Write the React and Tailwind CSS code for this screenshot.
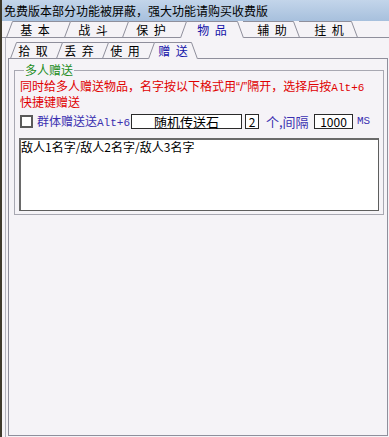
import React from 'react';

const FONT = { fontFamily: '"Noto Sans CJK SC", "Noto Sans", sans-serif' };
const MONO = { fontFamily: '"Liberation Mono", monospace' };
const LINE = '#8f8f9c';

// one slanted tab; kind = left of selected / selected / right of selected
function Tab({ label, w, width, kind, selected }) {
    const h = 17;
    let d;
    if (kind === 'sel') d = `M0.5 ${h} L6.5 0.5 H${w - 6.5} L${w - 0.5} ${h}`;
    else if (kind === 'left') d = `M0.5 ${h - 0.5} L6.5 0.5 H${w + 6.5} M0 ${h - 0.5} H${w}`;
    else d = `M-1 0.5 H${w - 6.5} L${w - 0.5} ${h - 0.5} M0 ${h - 0.5} H${w}`;

    return (
        <div className={`relative shrink-0 h-[17px] flex items-center justify-center pt-[1px] ${width}`}>
            <svg className="absolute inset-0 overflow-visible" width={w} height={h}>
                <path d={d} fill="none" stroke={LINE} strokeWidth="1" />
            </svg>
            <span className={`relative text-[12px] leading-[14px] whitespace-pre [word-spacing:3px] ${selected ? 'text-[#1212a8]' : 'text-black'}`}>{label}</span>
        </div>
    );
}

const TOP_TABS = [
    { label: '基 本', kind: 'left', w: 58, width: 'w-[58px]' },
    { label: '战 斗', kind: 'left', w: 58, width: 'w-[58px]' },
    { label: '保 护', kind: 'left', w: 58, width: 'w-[58px]' },
    { label: '物 品', kind: 'sel', w: 64, width: 'w-[64px]' },
    { label: '辅 助', kind: 'right', w: 56, width: 'w-[56px]' },
    { label: '挂 机', kind: 'right', w: 58, width: 'w-[58px]' },
];

const SUB_TABS = [
    { label: '拾 取', kind: 'left', w: 46, width: 'w-[46px]' },
    { label: '丢 弃', kind: 'left', w: 46, width: 'w-[46px]' },
    { label: '使 用', kind: 'left', w: 46, width: 'w-[46px]' },
    { label: '赠 送', kind: 'sel', w: 50, width: 'w-[50px]' },
];

export default function App() {
    return (
        <div className="w-[389px] h-[437px] flex bg-[#f5f3f7] overflow-hidden" style={FONT}>
            {/* desktop edge */}
            <div className="w-[2px] shrink-0 bg-[#3f3a2c]"></div>

            <div className="flex-1 flex flex-col min-w-0">
                {/* title bar */}
                <div className="h-[21px] shrink-0 flex items-center pl-[2px] bg-gradient-to-b from-[#c3d5ea] to-[#a7c0dd] text-[12px] text-black">
                    免费版本部分功能被屏蔽，强大功能请购买收费版
                </div>

                {/* main tabs */}
                <div className="h-[17px] shrink-0 flex">
                    <div className="w-[4px] border-b border-[#8f8f9c]"></div>
                    {TOP_TABS.map(t => (
                        <Tab key={t.label} {...t} selected={t.kind === 'sel'} />
                    ))}
                    <div className="flex-1 border-b border-[#8f8f9c]"></div>
                </div>

                {/* outer page */}
                <div className="flex-1 flex flex-col ml-[3px] border-l border-[#b4b4be] pb-[1px] min-h-0">
                    {/* sub tabs */}
                    <div className="h-[17px] mt-[4px] shrink-0 flex">
                        <div className="w-[2px] ml-[2px] border-b border-[#8f8f9c]"></div>
                        {SUB_TABS.map(t => (
                            <Tab key={t.label} {...t} selected={t.kind === 'sel'} />
                        ))}
                        <div className="flex-1 mr-[1px] border-b border-[#8f8f9c]"></div>
                    </div>

                    {/* inner page */}
                    <div className="flex-1 ml-[2px] mr-[1px] border-l border-r border-b border-[#8f8f9c] min-h-0">
                        <fieldset className="mt-[4px] ml-[5px] mr-[3px] border border-[#a8a8b2] pl-[5px] pb-[3px]">
                            <legend className="ml-[4px] px-[1px] text-[12px] leading-[14px] text-[#1c8c1c]">多人赠送</legend>

                            <p className="mt-[2px] text-[12px] leading-[13px] text-[#e00000]">
                                同时给多人赠送物品，名字按以下格式用<span style={{ fontFamily: '"Liberation Sans", sans-serif' }}>“/”</span>隔开，选择后按<span className="text-[11px]" style={MONO}>Alt+6</span>
                                <br />快捷键赠送
                            </p>

                            <div className="mt-[6px] h-[15px] flex items-center text-[12px] text-[#3a2fb0]">
                                <div className="w-[13px] h-[13px] shrink-0 border-2 border-[#5a5a5a] bg-white"></div>
                                <span className="w-[98px] pl-[4px] shrink-0 leading-[14px] whitespace-nowrap">
                                    群体赠送送<span className="text-[11px]" style={MONO}>Alt+6</span>
                                </span>
                                <div className="w-[111px] h-[15px] shrink-0 border border-[#2a2a2a] bg-white flex items-center justify-center text-black text-[13px] leading-[13px]">随机传送石</div>
                                <div className="w-[14px] h-[15px] ml-[3px] shrink-0 border border-[#2a2a2a] bg-white flex items-center justify-center text-black text-[12px] leading-[13px]">2</div>
                                <span className="w-[55px] pl-[7px] shrink-0 leading-[14px] text-[13px]">个,间隔</span>
                                <div className="w-[39px] h-[15px] shrink-0 border border-[#2a2a2a] bg-white flex items-center justify-center text-black text-[12px] leading-[13px]">1000</div>
                                <span className="ml-[4px] text-[11px]" style={MONO}>MS</span>
                            </div>

                            <div className="mt-[9px] -ml-[1px] w-[360px] h-[73px] border border-[#5e5e5e] border-t-2 border-l-2 border-t-[#6a6a6a] border-l-[#6a6a6a] bg-white text-[12px] leading-[13px] text-black">
                                敌人1名字/敌人2名字/敌人3名字
                            </div>
                        </fieldset>
                    </div>
                </div>
            </div>
        </div>
    );
}
